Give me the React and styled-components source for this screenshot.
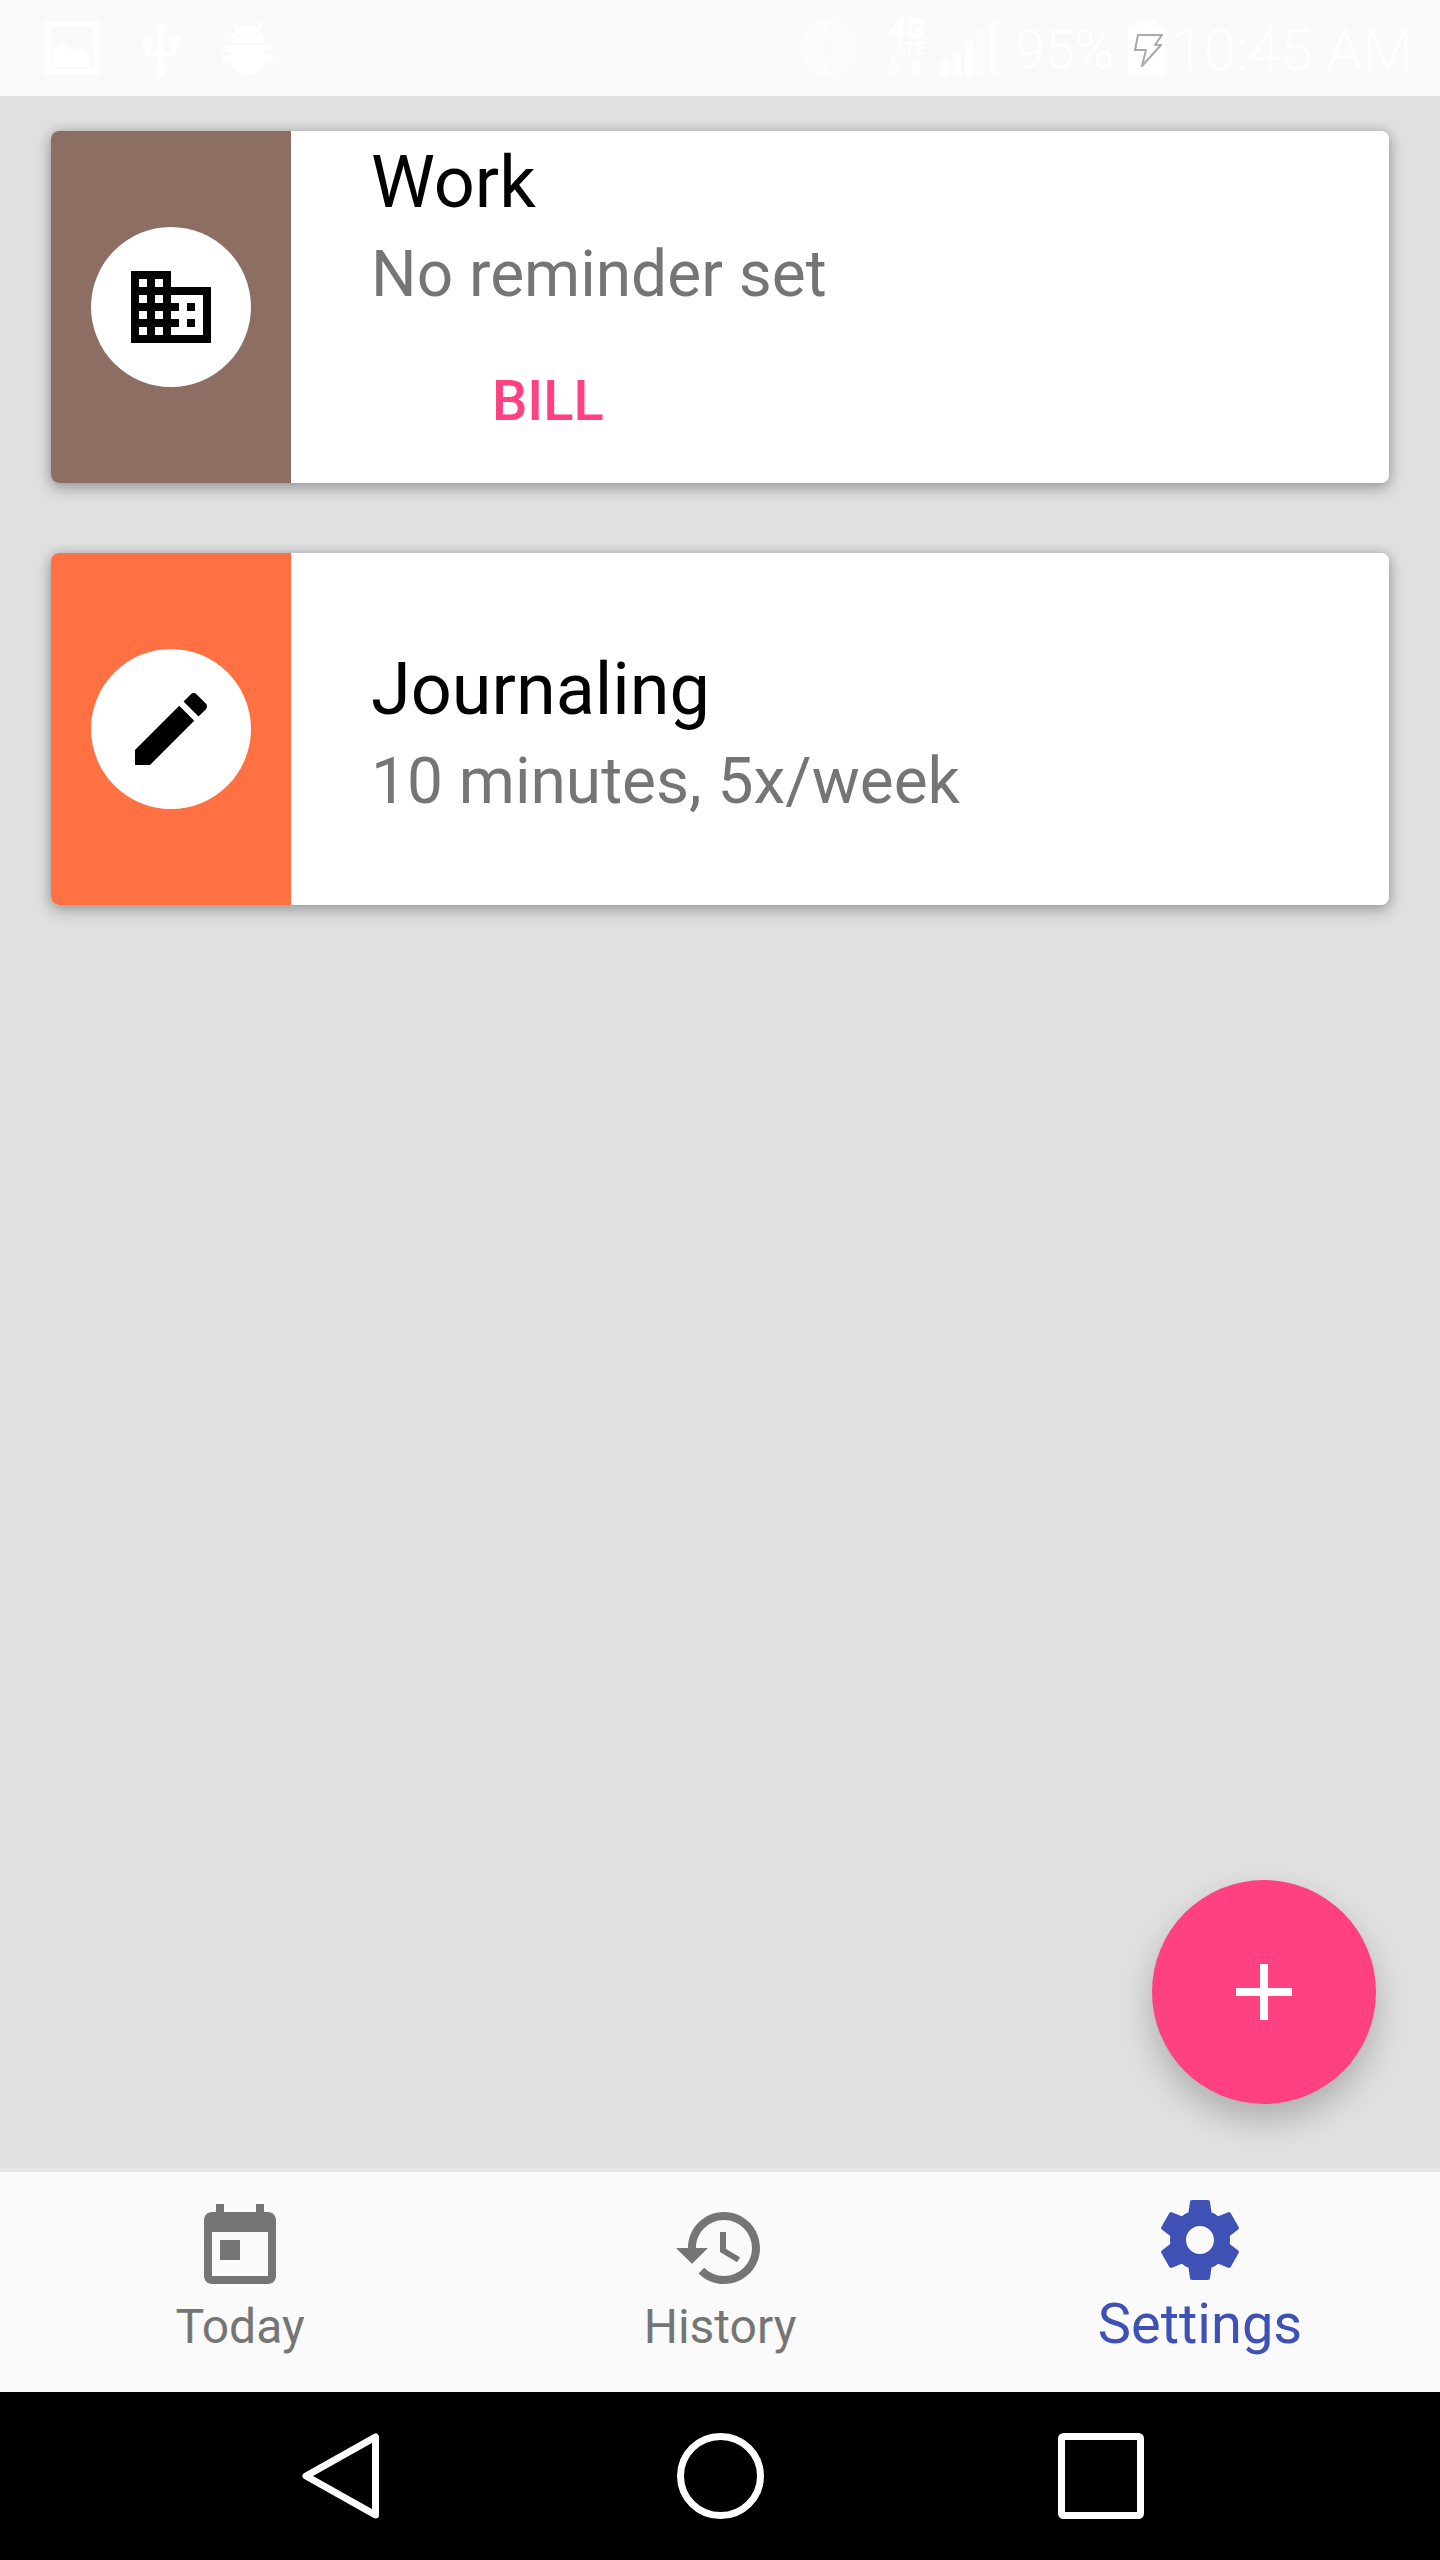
import React from "react";
import styled, { createGlobalStyle } from "styled-components";

const GlobalStyle = createGlobalStyle`
  * { box-sizing: border-box; }
  html, body { margin: 0; padding: 0; }
  body { font-family: Roboto, "Liberation Sans", sans-serif; background: #e0e0e0; }
`;

const Screen = styled.div`
  width: 1440px;
  height: 2560px;
  display: flex;
  flex-direction: column;
  overflow: hidden;
`;

const StatusBar = styled.div`
  height: 96px;
  flex: none;
  background: #fafafa;
  display: flex;
  align-items: center;
  justify-content: space-between;
  padding: 0 27px 0 45px;
  color: #fff;
`;

const StatusGroup = styled.div`
  display: flex;
  align-items: center;
  gap: ${(p) => p.$gap || 0}px;
`;

const StatusSlot = styled.div`
  flex: none;
  display: flex;
  margin-left: ${(p) => p.$left || 0}px;
`;

const StatusText = styled.span`
  flex: none;
  font-size: ${(p) => p.$size}px;
  font-weight: 300;
  line-height: 96px;
  margin: 4px 0 0 ${(p) => p.$left || 0}px;
  color: #fff;
`;

const Main = styled.main`
  flex: 1;
  position: relative;
  display: flex;
  flex-direction: column;
  gap: 70px;
  padding: 35px 51px 0;
`;

const CardShadow = styled.div`
  border-radius: 8px;
  box-shadow: 0 6px 16px rgba(0, 0, 0, 0.24), 0 0 12px rgba(0, 0, 0, 0.18);
`;

const Card = styled.section`
  height: 352px;
  display: flex;
  background: #fff;
  border-radius: 8px;
  overflow: hidden;
`;

const ColorStrip = styled.div`
  width: 240px;
  flex: none;
  background: ${(p) => p.$color};
  display: flex;
  align-items: center;
  justify-content: center;
`;

const IconCircle = styled.div`
  width: 160px;
  height: 160px;
  border-radius: 50%;
  background: #fff;
  display: flex;
  align-items: center;
  justify-content: center;
`;

const CardBody = styled.div`
  flex: 1;
  display: flex;
  flex-direction: column;
  justify-content: ${(p) => (p.$top ? "flex-start" : "center")};
  padding: ${(p) => (p.$top ? 10 : 9)}px 0 0 80px;
`;

const Title = styled.div`
  font-size: 72px;
  line-height: 84px;
  color: #000;
`;

const Subtitle = styled.div`
  font-size: 64px;
  line-height: 76px;
  margin-top: 12px;
  color: #757575;
`;

const Tag = styled.div`
  font-size: 56px;
  font-weight: 500;
  line-height: 64px;
  margin: 56px 0 0 121px;
  color: #ff4081;
`;

const Fab = styled.button`
  position: absolute;
  right: 64px;
  bottom: 64px;
  width: 224px;
  height: 224px;
  border: none;
  padding: 0;
  border-radius: 50%;
  background: #ff4081;
  display: flex;
  align-items: center;
  justify-content: center;
  box-shadow: 0 16px 32px rgba(0, 0, 0, 0.22);
`;

const BottomNav = styled.nav`
  height: 224px;
  flex: none;
  display: grid;
  grid-template-columns: repeat(3, 480px);
  background: #fafafa;
  border-top: 4px solid #e8e8e8;
`;

const NavItem = styled.div`
  display: flex;
  flex-direction: column;
  align-items: center;
  padding-top: ${(p) => (p.$active ? 20 : 28)}px;
  color: ${(p) => (p.$active ? "#3f51b5" : "#757575")};
`;

const NavLabel = styled.span`
  font-size: ${(p) => (p.$active ? 56 : 48)}px;
  line-height: 64px;
  margin-top: ${(p) => (p.$active ? 4 : -1)}px;
`;

const SystemBar = styled.div`
  height: 168px;
  flex: none;
  background: #000;
  display: grid;
  grid-template-columns: 380px 380px 382px;
  justify-items: center;
  align-items: center;
  padding-left: 150px;
`;

const GlyphSvg = styled.svg`
  display: block;
  width: 96px;
  height: 96px;
  fill: ${(p) => p.$fill || "currentColor"};
`;

const Glyph = ({ d, fill }) => (
  <GlyphSvg viewBox="0 0 24 24" $fill={fill}>
    <path d={d} />
  </GlyphSvg>
);

const DOMAIN = "M12 7V3H2v18h20V7H12zM6 19H4v-2h2v2zm0-4H4v-2h2v2zm0-4H4V9h2v2zm0-4H4V5h2v2zm4 12H8v-2h2v2zm0-4H8v-2h2v2zm0-4H8V9h2v2zm0-4H8V5h2v2zm10 12h-8v-2h2v-2h-2v-2h2v-2h-2V9h8v10zm-2-8h-2v2h2v-2zm0 4h-2v2h2v-2z";
const PENCIL = "M3 17.25V21h3.75L17.81 9.94l-3.75-3.75L3 17.25zM20.71 7.04c.39-.39.39-1.02 0-1.41l-2.34-2.34c-.39-.39-1.02-.39-1.41 0l-1.83 1.83 3.75 3.75 1.83-1.83z";
const TODAY = "M19 3h-1V1h-2v2H8V1H6v2H5c-1.11 0-1.99.9-1.99 2L3 19c0 1.1.89 2 2 2h14c1.1 0 2-.9 2-2V5c0-1.1-.9-2-2-2zm0 16H5V8h14v11zM7 10h5v5H7z";
const HISTORY = "M13 3c-4.97 0-9 4.03-9 9H1l3.89 3.89.07.14L9 12H6c0-3.87 3.13-7 7-7s7 3.13 7 7-3.13 7-7 7c-1.93 0-3.68-.79-4.94-2.06l-1.42 1.42C8.27 19.99 10.51 21 13 21c4.97 0 9-4.03 9-9s-4.03-9-9-9zm-1 5v5l4.28 2.54.72-1.21-3.5-2.08V8H12z";
const SETTINGS = "M19.43 12.98c.04-.32.07-.64.07-.98s-.03-.66-.07-.98l2.11-1.65c.19-.15.24-.42.12-.64l-2-3.46c-.12-.22-.39-.3-.61-.22l-2.49 1c-.52-.4-1.08-.73-1.69-.98l-.38-2.65C14.46 2.18 14.25 2 14 2h-4c-.25 0-.46.18-.49.42l-.38 2.65c-.61.25-1.17.59-1.69.98l-2.49-1c-.23-.09-.49 0-.61.22l-2 3.46c-.13.22-.07.49.12.64l2.11 1.65c-.04.32-.07.65-.07.98s.03.66.07.98l-2.11 1.65c-.19.15-.24.42-.12.64l2 3.46c.12.22.39.3.61.22l2.49-1c.52.4 1.08.73 1.69.98l.38 2.65c.03.24.24.42.49.42h4c.25 0 .46-.18.49-.42l.38-2.65c.61-.25 1.17-.59 1.69-.98l2.49 1c.23.09.49 0 .61-.22l2-3.46c.12-.22.07-.49-.12-.64l-2.11-1.65zM12 15.5c-1.93 0-3.5-1.57-3.5-3.5s1.57-3.5 3.5-3.5 3.5 1.57 3.5 3.5-1.57 3.5-3.5 3.5z";
const PLUS = "M19 13h-6v6h-2v-6H5v-2h6V5h2v6h6v2z";
const USB = "M15 7v4h1v2h-3V5h2l-3-4-3 4h2v8H8v-2.07c.7-.37 1.2-1.08 1.2-1.93 0-1.21-.99-2.2-2.2-2.2-1.21 0-2.2.99-2.2 2.2 0 .85.5 1.56 1.2 1.93V13c0 1.11.89 2 2 2h3v3.05c-.71.37-1.2 1.1-1.2 1.95 0 1.22.99 2.2 2.2 2.2 1.21 0 2.2-.98 2.2-2.2 0-.85-.49-1.58-1.2-1.95V15h3c1.11 0 2-.89 2-2v-2h1V7h-4z";

const GalleryIcon = () => (
  <svg width="54" height="54" viewBox="0 0 54 54" fill="none">
    <rect x="3" y="3" width="48" height="48" stroke="#fff" strokeWidth="6" />
    <path d="M8.5 29L17 21l12 11 7.5-4 8.5 6v12H8.5z" fill="#fff" />
  </svg>
);

const UsbIcon = () => (
  <svg width="37" height="56" viewBox="4.8 1 14.2 21.2" fill="#fff">
    <path d={USB} />
  </svg>
);

const DebugIcon = () => (
  <svg width="51" height="53" viewBox="0 0 51 53" fill="#fff">
    <path d="M8 21a17.5 17.5 0 0 1 35 0z" />
    <path d="M11 0l5 8M40 0l-5 8" stroke="#fff" strokeWidth="3.5" />
    <circle cx="17" cy="13" r="2" fill="#fafafa" />
    <circle cx="34" cy="13" r="2" fill="#fafafa" />
    <path d="M8 23h35v12.5a17.5 17.5 0 0 1-35 0z" />
    <rect x="0" y="23" width="51" height="6" />
    <rect x="0" y="33" width="51" height="6" />
  </svg>
);

const BluetoothBadge = () => (
  <svg width="57" height="58" viewBox="0 0 57 58">
    <circle cx="28.5" cy="29" r="28.5" fill="#fcfcfc" />
    <path d="M15 18l26 22-12 11V7l12 11-26 22" fill="none" stroke="#fafafa" strokeWidth="3" />
  </svg>
);

const NetworkStack = styled.div`
  width: 40px;
  height: 61px;
  flex: none;
  margin-left: 27px;
  display: flex;
  flex-direction: column;
  align-items: flex-end;
  color: #fff;
  font-style: italic;
`;

const NetworkBig = styled.span`
  font-size: 29px;
  font-weight: 900;
  line-height: 22px;
`;

const NetworkSmall = styled.span`
  font-size: 18px;
  font-weight: 700;
  line-height: 17px;
`;

const TransferArrows = () => (
  <svg width="40" height="21" viewBox="0 0 40 21" fill="#fdfdfd">
    <path d="M5 0h7v11h6l-9 10-9-10h5zM27 21h7V10h6L31 0l-9 10h5z" />
  </svg>
);

const SignalBars = () => (
  <svg width="56" height="56" viewBox="0 0 56 56" fill="#fff">
    <rect x="0" y="41" width="8" height="15" />
    <rect x="12" y="31" width="8" height="25" />
    <rect x="24" y="21" width="8" height="35" />
    <rect x="36" y="10" width="8" height="46" opacity="0.5" />
    <rect x="48" y="0" width="8" height="56" opacity="0.5" />
  </svg>
);

const BatteryIcon = () => (
  <svg width="37" height="56" viewBox="0 0 37 56">
    <path d="M9 0h18v6h10v50H0V6h9z" fill="#fff" />
    <path d="M10 15h24l-7 10h6L14 46l4-16H7z" fill="none" stroke="#aaa" strokeWidth="2" strokeLinejoin="round" />
  </svg>
);

const BackIcon = () => (
  <svg width="77" height="86" viewBox="0 0 77 86" fill="none">
    <path d="M73.5 4v78L4 43z" stroke="#fff" strokeWidth="7" strokeLinejoin="round" />
  </svg>
);

const HomeIcon = () => (
  <svg width="87" height="86" viewBox="0 0 87 86" fill="none">
    <ellipse cx="43.5" cy="43" rx="40" ry="39.5" stroke="#fff" strokeWidth="7" />
  </svg>
);

const RecentIcon = () => (
  <svg width="86" height="86" viewBox="0 0 86 86" fill="none">
    <rect x="3.5" y="3.5" width="79" height="79" rx="2" stroke="#fff" strokeWidth="7" />
  </svg>
);

const App = () => (
  <>
    <GlobalStyle />
    <Screen>
      <StatusBar>
        <StatusGroup $gap={43}>
          <GalleryIcon />
          <UsbIcon />
          <DebugIcon />
        </StatusGroup>
        <StatusGroup>
          <BluetoothBadge />
          <NetworkStack>
            <NetworkBig>4G</NetworkBig>
            <NetworkSmall>LTE</NetworkSmall>
            <TransferArrows />
          </NetworkStack>
          <StatusSlot $left={16}>
            <SignalBars />
          </StatusSlot>
          <StatusText $size={53} $left={19}>95%</StatusText>
          <StatusSlot $left={14}>
            <BatteryIcon />
          </StatusSlot>
          <StatusText $size={58} $left={7}>10:45 AM</StatusText>
        </StatusGroup>
      </StatusBar>

      <Main>
        <CardShadow>
          <Card>
            <ColorStrip $color="#8d6e63">
              <IconCircle>
                <Glyph d={DOMAIN} fill="#000" />
              </IconCircle>
            </ColorStrip>
            <CardBody $top>
              <Title>Work</Title>
              <Subtitle>No reminder set</Subtitle>
              <Tag>BILL</Tag>
            </CardBody>
          </Card>
        </CardShadow>
        <CardShadow>
          <Card>
            <ColorStrip $color="#ff7043">
              <IconCircle>
                <Glyph d={PENCIL} fill="#000" />
              </IconCircle>
            </ColorStrip>
            <CardBody>
              <Title>Journaling</Title>
              <Subtitle>10 minutes, 5x/week</Subtitle>
            </CardBody>
          </Card>
        </CardShadow>
        <Fab aria-label="Add">
          <Glyph d={PLUS} fill="#fff" />
        </Fab>
      </Main>

      <BottomNav>
        <NavItem>
          <Glyph d={TODAY} />
          <NavLabel>Today</NavLabel>
        </NavItem>
        <NavItem>
          <Glyph d={HISTORY} />
          <NavLabel>History</NavLabel>
        </NavItem>
        <NavItem $active>
          <Glyph d={SETTINGS} />
          <NavLabel $active>Settings</NavLabel>
        </NavItem>
      </BottomNav>

      <SystemBar>
        <BackIcon />
        <HomeIcon />
        <RecentIcon />
      </SystemBar>
    </Screen>
  </>
);

export default App;
